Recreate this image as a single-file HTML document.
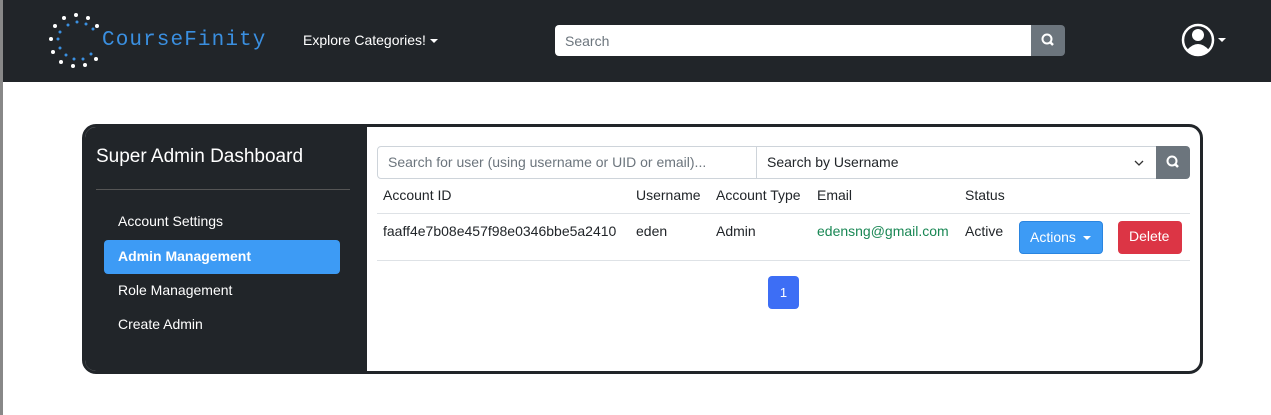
<!DOCTYPE html>
<html><head><style>
*{box-sizing:border-box;margin:0;padding:0}
body{width:1271px;height:415px;background:#fff;font-family:"Liberation Sans",Arial,sans-serif;position:relative;overflow:hidden}
.nav{position:absolute;left:3px;top:0;width:1268px;height:82px;background:#212529}
.abs{position:absolute}
.logo{left:102px;top:29px;color:#3a8fe0;font-family:"Liberation Mono",monospace;font-size:21px;letter-spacing:1.1px}
.cat{left:303px;top:32px;color:#fff;font-size:14px}
.caret{display:inline-block;border-left:4px solid transparent;border-right:4px solid transparent;border-top:4px solid currentColor;vertical-align:middle;margin-left:4px}
.search{left:555px;top:25px;width:476px;height:31px;background:#fff;border-radius:4px 0 0 4px;color:#6c757d;font-size:14px;padding:8px 10px}
.sbtn{left:1031px;top:25px;width:34px;height:31px;background:#6c757d;border-radius:0 4px 4px 0}
.card{left:82px;top:124px;width:1121px;height:250px;border:3px solid #212529;border-radius:14px;overflow:hidden;background:#fff}
.side{position:absolute;left:0;top:0;width:282px;height:100%;background:#212529}
.side h2{position:absolute;left:11px;top:19px;color:#fff;font-size:19px;font-weight:normal}
.side hr{position:absolute;left:11px;top:62px;width:254px;border:0;border-top:1px solid #555}
.item{position:absolute;left:19px;width:236px;height:34px;color:#fff;font-size:14px;padding:8px 14px;border-radius:4px}
.txt{font-size:14px;color:#212529}
</style></head><body>
<div class="abs" style="left:0;top:0;width:3px;height:415px;background:#888"></div>
<div class="nav"></div>
<svg class="abs" style="left:46px;top:12px" width="56" height="58">
<g fill="#fff"><circle cx="30" cy="3" r="2"/><circle cx="42" cy="6" r="2"/><circle cx="18" cy="6" r="2"/><circle cx="9" cy="14" r="2"/><circle cx="51" cy="14" r="2"/><circle cx="5" cy="27" r="2"/><circle cx="7" cy="40" r="2"/><circle cx="15" cy="50" r="2"/><circle cx="27" cy="54" r="2"/><circle cx="39" cy="53" r="2"/><circle cx="50" cy="47" r="2"/></g>
<g fill="#3a8fe0"><circle cx="22" cy="13" r="1.5"/><circle cx="31" cy="10" r="1.5"/><circle cx="40" cy="12" r="1.5"/><circle cx="47" cy="17" r="1.5"/><circle cx="14" cy="20" r="1.5"/><circle cx="12" cy="27" r="1.5"/><circle cx="14" cy="36" r="1.5"/><circle cx="20" cy="43" r="1.5"/><circle cx="28" cy="47" r="1.5"/><circle cx="37" cy="47" r="1.5"/><circle cx="45" cy="42" r="1.5"/></g>
</svg>
<div class="abs logo">CourseFinity</div>
<div class="abs cat">Explore Categories!<span class="caret"></span></div>
<div class="abs search">Search</div>
<div class="abs sbtn"><svg width="34" height="31"><circle cx="16" cy="14" r="4.5" fill="none" stroke="#fff" stroke-width="2"/><line x1="19" y1="17" x2="22" y2="20" stroke="#fff" stroke-width="2.5"/></svg></div>
<svg class="abs" style="left:1181px;top:23px" width="50" height="36"><circle cx="17" cy="17" r="15" fill="none" stroke="#fff" stroke-width="2.5"/><circle cx="17" cy="12" r="6" fill="#fff"/><path d="M6 27 Q17 15 28 27 Q17 36 6 27Z" fill="#fff"/><path d="M37 15 l8 0 -4 4z" fill="#fff"/></svg>
<div class="abs card">
<div class="side"><h2>Super Admin Dashboard</h2><hr>
<div class="item" style="top:78px">Account Settings</div>
<div class="item" style="top:113px;background:#3d9bf5;font-weight:bold">Admin Management</div>
<div class="item" style="top:147px">Role Management</div>
<div class="item" style="top:181px">Create Admin</div>
</div>
<div class="abs" style="left:292px;top:19px;width:380px;height:33px;border:1px solid #ced4da;border-radius:4px 0 0 4px;padding:7px 10px;color:#6c757d;font-size:14px">Search for user (using username or UID or email)...</div>
<div class="abs" style="left:671px;top:19px;width:401px;height:33px;border:1px solid #ced4da;padding:7px 10px;font-size:14px;color:#212529">Search by Username<svg class="abs" style="right:12px;top:13px" width="10" height="7"><path d="M1 1 L5 5 L9 1" fill="none" stroke="#333" stroke-width="1.3"/></svg></div>
<div class="abs" style="left:1071px;top:19px;width:34px;height:33px;background:#6c757d;border-radius:0 4px 4px 0"><svg width="34" height="33"><circle cx="16" cy="15" r="4.5" fill="none" stroke="#fff" stroke-width="2"/><line x1="19" y1="18" x2="22" y2="21" stroke="#fff" stroke-width="2.5"/></svg></div>
<div class="abs txt" style="left:298px;top:60px">Account ID</div>
<div class="abs txt" style="left:551px;top:60px">Username</div>
<div class="abs txt" style="left:631px;top:60px">Account Type</div>
<div class="abs txt" style="left:732px;top:60px">Email</div>
<div class="abs txt" style="left:880px;top:60px">Status</div>
<div class="abs" style="left:292px;top:86px;width:813px;border-top:1px solid #dee2e6"></div>
<div class="abs txt" style="left:298px;top:96px">faaff4e7b08e457f98e0346bbe5a2410</div>
<div class="abs txt" style="left:551px;top:96px">eden</div>
<div class="abs txt" style="left:631px;top:96px">Admin</div>
<div class="abs txt" style="left:732px;top:96px;color:#198754">edensng@gmail.com</div>
<div class="abs txt" style="left:880px;top:96px">Active</div>
<div class="abs" style="left:934px;top:94px;width:84px;height:33px;background:#3d9bf5;border:1px solid #2a85e0;border-radius:4px;color:#fff;font-size:14px;padding:7px 10px">Actions<span class="caret" style="margin-left:7px"></span></div>
<div class="abs" style="left:1033px;top:94px;width:64px;height:33px;background:#dc3545;border-radius:4px;color:#fff;font-size:14px;padding:7px 11px">Delete</div>
<div class="abs" style="left:292px;top:133px;width:813px;border-top:1px solid #dee2e6"></div>
<div class="abs" style="left:683px;top:149px;width:31px;height:33px;background:#3d6ef5;border-radius:4px;color:#fff;font-size:13px;text-align:center;line-height:33px">1</div>
</div>
</body></html>
